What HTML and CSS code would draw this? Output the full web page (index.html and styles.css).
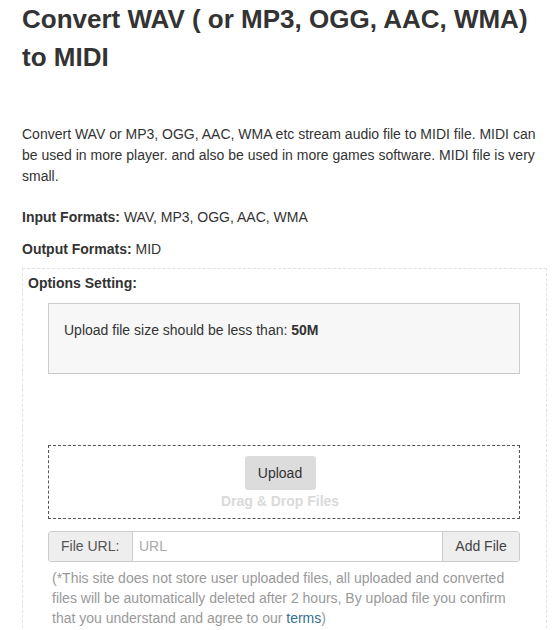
FILE: index.html
```html
<!DOCTYPE html>
<html>
<head>
<meta charset="utf-8">
<link rel="stylesheet" href="styles.css">
</head>
<body>
<div class="page">
  <h1 class="title">Convert WAV ( or MP3, OGG, AAC, WMA) to MIDI</h1>
  <p class="intro">Convert WAV or MP3, OGG, AAC, WMA etc stream audio file to MIDI file. MIDI can be used in more player. and also be used in more games software. MIDI file is very small.</p>
  <p class="formats"><b>Input Formats:</b> WAV, MP3, OGG, AAC, WMA</p>
  <p class="formats"><b>Output Formats:</b> MID</p>
  <div class="options">
    <div class="options-title">Options Setting:</div>
    <div class="inner">
      <div class="panel">Upload file size should be less than: <b>50M</b></div>
      <div class="spacer"></div>
      <div class="dropzone">
        <button class="upload-btn">Upload</button>
        <div class="drop-text">Drag &amp; Drop Files</div>
      </div>
      <div class="url-group">
        <span class="addon">File URL:</span>
        <span class="url-input">URL</span>
        <span class="add-btn">Add File</span>
      </div>
      <p class="note">(*This site does not store user uploaded files, all uploaded and converted files will be automatically deleted after 2 hours, By upload file you confirm that you understand and agree to our <a href="#">terms</a>)</p>
    </div>
  </div>
</div>
</body>
</html>
```

FILE: styles.css
```css
html, body {
  margin: 0;
  padding: 0;
  background: #fff;
}
body {
  font-family: "Liberation Sans", Arial, sans-serif;
  font-size: 14px;
  color: #333;
}
.page {
  padding-left: 22px;
  width: 525px;
}
.title {
  margin: 0;
  font-size: 26px;
  line-height: 38px;
  font-weight: bold;
  color: #333;
  padding-right: 10px;
}
.intro {
  margin: 48px 0 0;
  line-height: 21px;
  padding-right: 8px;
}
.formats {
  margin: 0;
  line-height: 20px;
}
.intro + .formats {
  margin-top: 20px;
}
.formats + .formats {
  margin-top: 12px;
}
.options {
  margin-top: 9px;
  border: 1px dashed #e2e2e2;
  border-bottom: none;
  padding: 4px 0 0 5px;
}
.options-title {
  font-weight: bold;
  line-height: 20px;
}
.inner {
  margin: 10px 26px 0 20px;
}
.panel {
  height: 71px;
  box-sizing: border-box;
  border: 1px solid #ccc;
  background: #f7f7f7;
  padding: 16px 15px 0;
  line-height: 20px;
}
.spacer {
  height: 71px;
}
.dropzone {
  height: 74px;
  box-sizing: border-box;
  border: 1px dashed #555;
  display: flex;
  flex-direction: column;
  align-items: center;
  padding-top: 10px;
  padding-right: 8px;
}
.upload-btn {
  width: 71px;
  height: 34px;
  border: none;
  border-radius: 3px;
  background: #dcdcdc;
  color: #333;
  font-family: "Liberation Sans", Arial, sans-serif;
  font-size: 14px;
  padding: 0;
}
.drop-text {
  color: #dadada;
  font-weight: bold;
  line-height: 20px;
  margin-top: 1px;
}
.url-group {
  margin-top: 12px;
  display: flex;
  height: 31px;
  box-sizing: border-box;
  border: 1px solid #ccc;
  border-radius: 3px;
  overflow: hidden;
  line-height: 29px;
}
.addon {
  width: 84px;
  box-sizing: border-box;
  background: #eee;
  border-right: 1px solid #ccc;
  padding-left: 12px;
  color: #555;
}
.url-input {
  flex: 1;
  padding-left: 6px;
  color: #aaa;
}
.add-btn {
  width: 77px;
  box-sizing: border-box;
  background: #eee;
  border-left: 1px solid #ccc;
  text-align: center;
  color: #444;
}
.note {
  margin: 6px 0 0 4px;
  line-height: 20px;
  color: #999;
}
.note a {
  color: #31708f;
  text-decoration: none;
}
```
